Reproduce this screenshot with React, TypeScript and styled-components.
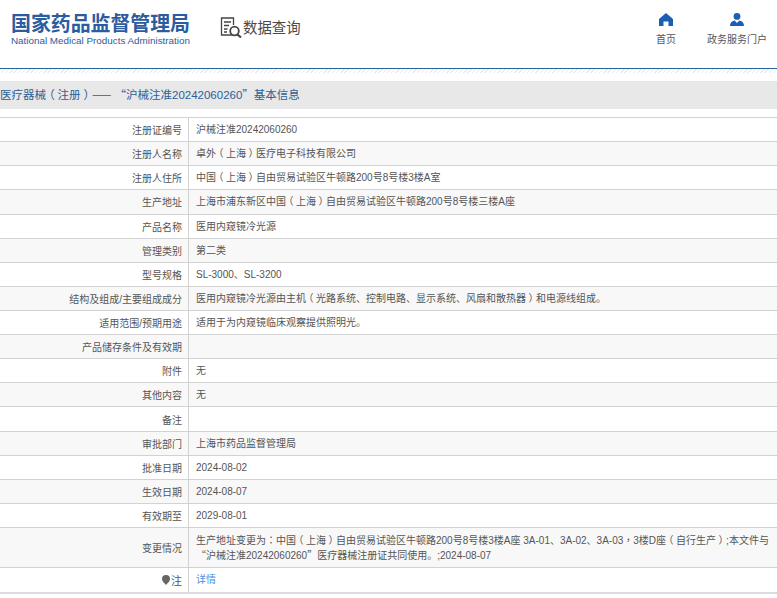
import styled, { createGlobalStyle } from "styled-components";

const BLUE = "#2b5c9e";
const LINE = "#d2d2d2";
const FONT = `"Liberation Sans", "Noto Sans CJK SC", sans-serif`;

const ROWS: { label: string; value: string[] }[] = [
  { label: "注册证编号", value: ["沪械注准20242060260"] },
  { label: "注册人名称", value: ["卓外（上海）医疗电子科技有限公司"] },
  { label: "注册人住所", value: ["中国（上海）自由贸易试验区牛顿路200号8号楼3楼A室"] },
  { label: "生产地址", value: ["上海市浦东新区中国（上海）自由贸易试验区牛顿路200号8号楼三楼A座"] },
  { label: "产品名称", value: ["医用内窥镜冷光源"] },
  { label: "管理类别", value: ["第二类"] },
  { label: "型号规格", value: ["SL-3000、SL-3200"] },
  { label: "结构及组成/主要组成成分", value: ["医用内窥镜冷光源由主机（光路系统、控制电路、显示系统、风扇和散热器）和电源线组成。"] },
  { label: "适用范围/预期用途", value: ["适用于为内窥镜临床观察提供照明光。"] },
  { label: "产品储存条件及有效期", value: [""] },
  { label: "附件", value: ["无"] },
  { label: "其他内容", value: ["无"] },
  { label: "备注", value: [""] },
  { label: "审批部门", value: ["上海市药品监督管理局"] },
  { label: "批准日期", value: ["2024-08-02"] },
  { label: "生效日期", value: ["2024-08-07"] },
  { label: "有效期至", value: ["2029-08-01"] },
  {
    label: "变更情况",
    value: [
      "生产地址变更为：中国（上海）自由贸易试验区牛顿路200号8号楼3楼A座 3A-01、3A-02、3A-03，3楼D座（自行生产）;本文件与",
      "“沪械注准20242060260”医疗器械注册证共同使用。;2024-08-07",
    ],
  },
];

const Global = createGlobalStyle`
  html, body { margin: 0; padding: 0; background: #fff; }
  body { font-family: ${FONT}; overflow: hidden; text-spacing-trim: space-all; }
`;

const Page = styled.div`
  width: 777px;
  height: 598px;
  overflow: hidden;
`;

const Header = styled.header`
  height: 68px;
  display: flex;
  align-items: flex-start;
  border-bottom: 1px solid #2c6096;
`;

const Logo = styled.div`
  width: 190px;
  margin-left: 11px;
  padding-top: 10px;
`;

const LogoCn = styled.div`
  font-size: 19.9px;
  line-height: 28px;
  font-weight: 700;
  color: ${BLUE};
  white-space: nowrap;
`;

const LogoEn = styled.div`
  font-size: 9.85px;
  line-height: 12px;
  margin-top: -3px;
  color: ${BLUE};
  white-space: nowrap;
`;

const Query = styled.div`
  display: flex;
  align-items: center;
  margin: 16px 0 0 19px;
  font-size: 14.4px;
  line-height: 22px;
  color: #4a4a4a;
`;

const TopNav = styled.nav`
  margin-left: auto;
  display: flex;
  padding: 13px 10px 0 0;
  gap: 31px;
`;

const NavItem = styled.div`
  display: flex;
  flex-direction: column;
  align-items: center;
  font-size: 10px;
  line-height: 14px;
  color: #555;
  gap: 7px;
`;

const Stripe = styled.div`
  height: 4px;
  background: repeating-linear-gradient(135deg, #e3edf3 0 1px, #fff 1px 3px);
`;

const Title = styled.h1`
  margin: 8px 0;
  height: 28px;
  background: #e8e8e8;
  color: #2c6096;
  font-size: 11.5px;
  font-weight: 400;
  line-height: 28px;
  white-space: nowrap;
`;

const Table = styled.div`
  border-top: 1px solid ${LINE};
  border-bottom: 2px solid #dcdcdc;
`;

const Row = styled.div<{ $odd: boolean }>`
  display: grid;
  grid-template-columns: 189px 1fr;
  background: ${p => (p.$odd ? "#f8f8f8" : "#fff")};
  border-bottom: 1px solid ${LINE};
  &:last-child { border-bottom: none; min-height: 24px; }
`;

const Label = styled.div`
  display: flex;
  align-items: center;
  justify-content: flex-end;
  padding-right: 6px;
  border-right: 1px solid ${LINE};
  font-size: 10px;
  color: #555;
  white-space: nowrap;
`;

const Value = styled.div`
  min-height: 15.12px;
  padding: 4px 0 4px 7px;
  font-size: 10px;
  line-height: 15.12px;
  color: #555;
  white-space: nowrap;
`;

const TallValue = styled(Value)`
  padding: 5px 0 4px 7px;
`;

// the original's brackets, colon and comma sit centred in their em box:
// take the half-width form of the bracket, then pad both sides equally
const Bracket = styled.span`
  line-height: 0;
  padding: 0 0.25em;
  font-family: "Noto Sans CJK SC", sans-serif;
  font-feature-settings: "halt";
`;

const Centered = styled.span`
  line-height: 0;
  font-family: "Noto Sans CJK TC", sans-serif;
`;

const Wide = styled.span`
  line-height: 0;
  font-family: "Noto Sans CJK SC", sans-serif;
`;

const NoteDot = styled.svg`
  width: 8px;
  height: 10px;
  margin-right: 1px;
`;

const NoteLabel = styled.span`
  font-size: 11px;
`;

const DetailLink = styled.a`
  color: #4a90e2;
  text-decoration: none;
`;

function Text({ children }: { children: string }) {
  const parts = children.split(/([（）]|[：，]|[“”—]+)/);
  return (
    <>
      {parts.map((part, i) => {
        if (part === "（" || part === "）") return <Bracket key={i}>{part}</Bracket>;
        if (/^[：，]/.test(part)) return <Centered key={i}>{part}</Centered>;
        if (/^[“”—]/.test(part)) return <Wide key={i}>{part}</Wide>;
        return part;
      })}
    </>
  );
}

export default function App() {
  return (
    <Page>
      <Global />
      <Header>
        <Logo>
          <LogoCn>国家药品监督管理局</LogoCn>
          <LogoEn>National Medical Products Administration</LogoEn>
        </Logo>
        <Query>
          <svg width="23" height="23" viewBox="0 0 23 23" fill="none" stroke="#444" strokeWidth="1.3">
            <path d="M12 19H1.500V2h12v7" />
            <path d="M4 6h7M4 9.500h5M4 13h3.500M4 16h3" />
            <circle cx="14.500" cy="15" r="4.300" strokeWidth="1.800" />
            <path d="M17.500 18.500l3.500 3" strokeWidth="2.200" />
          </svg>
          数据查询
        </Query>
        <TopNav>
          <NavItem>
            <svg width="14" height="13" viewBox="0 0 14 13" fill="#1a5fb4">
              <path d="M7 0L14 6v7H9.500V8.500h-5V13H0V6z" />
            </svg>
            首页
          </NavItem>
          <NavItem>
            <svg width="14" height="13" viewBox="0 0 14 13" fill="#1a5fb4">
              <circle cx="7" cy="3.400" r="3.400" />
              <path d="M0 13c0-3 1.600-5 4.600-5.500L7 10l2.400-2.500C12.400 8 14 10 14 13z" />
            </svg>
            政务服务门户
          </NavItem>
        </TopNav>
      </Header>
      <Stripe />
      <Title>
        <Text>{"医疗器械（注册）—— “沪械注准20242060260”基本信息"}</Text>
      </Title>
      <Table>
        {ROWS.map((row, i) => {
          const Cell = row.value.length > 1 ? TallValue : Value;
          return (
            <Row key={row.label} $odd={i % 2 === 1}>
              <Label>{row.label}</Label>
              <Cell>
                {row.value[0] && <Text>{row.value[0]}</Text>}
                {row.value[1] && <br />}
                {row.value[1] && <Text>{row.value[1]}</Text>}
              </Cell>
            </Row>
          );
        })}
        <Row $odd={false}>
          <Label>
            <NoteDot viewBox="0 0 8 10">
              <path d="M4 0a4 4 0 0 1 4 4c0 2.500-2.500 4-4 6C2.500 8 0 6.500 0 4a4 4 0 0 1 4-4z" fill="#666" />
            </NoteDot>
            <NoteLabel>注</NoteLabel>
          </Label>
          <Value>
            <DetailLink href="#">详情</DetailLink>
          </Value>
        </Row>
      </Table>
    </Page>
  );
}
